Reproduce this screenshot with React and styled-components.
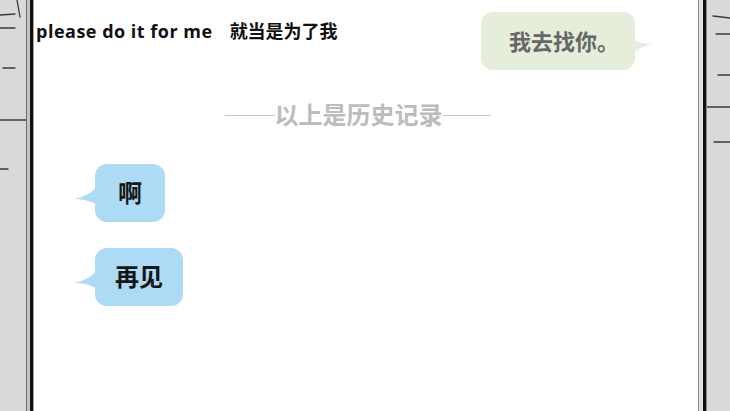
import React from "react";
import styled, { createGlobalStyle } from "styled-components";

const GlobalStyle = createGlobalStyle`
   html, body {
      margin: 0;
      padding: 0;
      background: #d8d8d8;
      overflow: hidden;
   }
`;

const CJK = `"Open Sans", "Noto Sans CJK SC", sans-serif`;

const Frame = styled.div`
   display: flex;
   width: 730px;
   height: 411px;
   background: #d8d8d8;
`;

const Rail = styled.div`
   flex: none;
   width: ${(p) => p.width}px;
   height: 100%;
   background: #d9d9d9;
   svg {
      display: block;
   }
`;

// double ink line around the phone screen
const Bezel = styled.div`
   flex: none;
   width: ${(p) => (p.side === "left" ? 8 : 9)}px;
   height: 100%;
   background: ${(p) =>
      p.side === "left"
         ? "linear-gradient(90deg, #6a6a6a 0 1px, #c4c4c4 1px 4px, #111 4px 7px, #a0a0a0 7px 8px)"
         : "linear-gradient(90deg, #8a8a8a 0 1px, #e2e2e2 1px 5px, #111 5px 8px, #8c8c8c 8px 9px)"};
`;

const Screen = styled.div`
   flex: 1;
   display: flex;
   flex-direction: column;
   background: #fff;
   font-family: ${CJK};
`;

const Header = styled.div`
   display: flex;
   justify-content: space-between;
   align-items: flex-start;
   padding: 12px 63px 0 2px;
`;

const Caption = styled.div`
   display: flex;
   gap: 17px;
   margin-top: 9px;
   font-weight: 700;
   line-height: 20px;
   color: #111;
   span:first-child {
      font-size: 18px;
      letter-spacing: 0.5px;
   }
   span:last-child {
      font-size: 18px;
   }
`;

const Bubble = styled.div`
   position: relative;
   height: 58px;
   min-width: ${(p) => (p.mine ? 0 : 70)}px;
   box-sizing: border-box;
   padding: ${(p) => (p.mine ? "0 16px 0 28px" : "0 20px")};
   border-radius: 12px;
   background: ${(p) => (p.mine ? "#e4eedb" : "#addaf5")};
   color: ${(p) => (p.mine ? "#676767" : "#161616")};
   font-size: ${(p) => (p.mine ? 22 : 24)}px;
   font-weight: 700;
   line-height: 58px;
   text-align: center;
   white-space: nowrap;

   &::after {
      content: "";
      position: absolute;
      background: inherit;
      ${(p) =>
         p.mine
            ? `right: -17px; top: 28px; width: 18px; height: 12px;
               clip-path: path('M18 4 Q8 4 0 0 L0 12 Q8 6 18 4 Z');`
            : `left: -21px; top: 24px; width: 22px; height: 16px;
               clip-path: path('M0 11 Q12 9 22 0 L22 16 Q12 11 0 11 Z');`}
   }
`;

const Divider = styled.div`
   display: flex;
   align-items: center;
   justify-content: center;
   margin-top: 30px;
   padding-right: 17px;
   color: #bcbcbc;
   font-size: 24px;
   font-weight: 700;
   line-height: 30px;

   &::before,
   &::after {
      content: "";
      width: 50px;
      height: 1px;
      background: #c6c6c6;
   }
   &::after {
      width: 48px;
   }
`;

const Thread = styled.div`
   display: flex;
   flex-direction: column;
   align-items: flex-start;
   gap: 26px;
   margin-top: 34px;
   padding-left: 61px;
`;

function Sketch({ width, strokes }) {
   return (
      <svg width={width} height="411" viewBox={`0 0 ${width} 411`}>
         {strokes.map(([x1, y1, x2, y2], i) => (
            <line
               key={i}
               x1={x1}
               y1={y1}
               x2={x2}
               y2={y2}
               stroke="#3a3a3a"
               strokeWidth="1.3"
               strokeLinecap="round"
            />
         ))}
      </svg>
   );
}

const leftStrokes = [
   [17, 0, 20, 17],
   [0, 15, 15, 14],
   [0, 28, 15, 28],
   [3, 68, 15, 68],
   [0, 120, 26, 120],
   [0, 169, 8, 169],
];

const rightStrokes = [
   [6, 16, 23, 18],
   [9, 34, 23, 34],
   [11, 75, 23, 75],
   [0, 107, 23, 107],
   [7, 142, 23, 142],
];

export default function App() {
   return (
      <>
         <GlobalStyle />
         <Frame>
            <Rail width={26}>
               <Sketch width={26} strokes={leftStrokes} />
            </Rail>
            <Bezel side="left" />
            <Screen>
               <Header>
                  <Caption>
                     <span>please do it for me</span>
                     <span>就当是为了我</span>
                  </Caption>
                  <Bubble mine>我去找你。</Bubble>
               </Header>
               <Divider>以上是历史记录</Divider>
               <Thread>
                  <Bubble>啊</Bubble>
                  <Bubble>再见</Bubble>
               </Thread>
            </Screen>
            <Bezel side="right" />
            <Rail width={23}>
               <Sketch width={23} strokes={rightStrokes} />
            </Rail>
         </Frame>
      </>
   );
}
